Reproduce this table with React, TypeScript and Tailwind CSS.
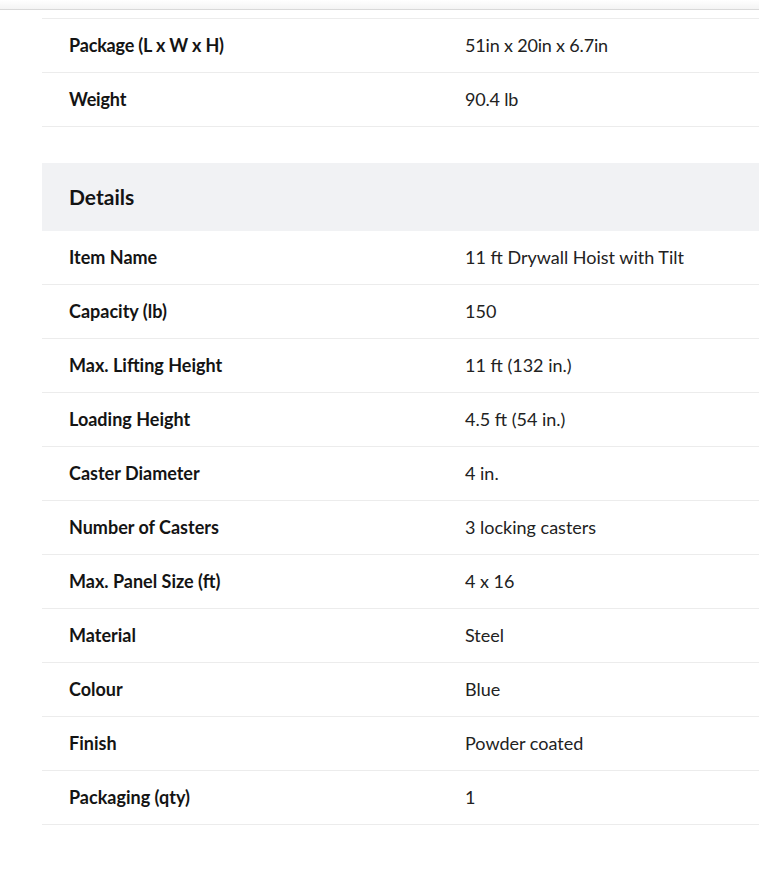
import React from "react";

const top = [
  ["Package (L x W x H)", "51in x 20in x 6.7in"],
  ["Weight", "90.4 lb"],
];

const details = [
  ["Item Name", "11 ft Drywall Hoist with Tilt"],
  ["Capacity (lb)", "150"],
  ["Max. Lifting Height", "11 ft (132 in.)"],
  ["Loading Height", "4.5 ft (54 in.)"],
  ["Caster Diameter", "4 in."],
  ["Number of Casters", "3 locking casters"],
  ["Max. Panel Size (ft)", "4 x 16"],
  ["Material", "Steel"],
  ["Colour", "Blue"],
  ["Finish", "Powder coated"],
  ["Packaging (qty)", "1"],
];

function Row({ label, value, condensed }: { label: string; value: string; condensed?: boolean }) {
  return (
    <div className="flex h-[54px] items-center border-b border-[#ececec]">
      <div className={`w-[396px] pl-[27px] text-[18px] font-bold text-[#141414] ${condensed ? "tracking-[-0.01em]" : ""}`}>{label}</div>
      <div className={`pl-[27px] text-[18px] text-[#222] ${condensed ? "tracking-[-0.01em]" : ""}`}>{value}</div>
    </div>
  );
}

export default function App() {
  return (
    <div className="min-h-[877px] w-[759px] bg-white" style={{ fontFamily: "Lato, 'Open Sans', sans-serif" }}>
      <div className="h-[10px] border-b border-[#d9d9d9] bg-gradient-to-b from-[#ffffff] to-[#f4f4f4]" />
      <div className="ml-[42px] mt-[8px]">
        <div className="border-t border-[#ececec]">
          {top.map(([l, v]) => (
            <Row key={l} label={l} value={v} condensed />
          ))}
        </div>
        <div className="mt-[36px] flex h-[68px] items-center bg-[#f1f2f4] pl-[27px] text-[21px] font-bold text-[#141414]">
          Details
        </div>
        <div>
          {details.map(([l, v]) => (
            <Row key={l} label={l} value={v} />
          ))}
        </div>
      </div>
    </div>
  );
}
